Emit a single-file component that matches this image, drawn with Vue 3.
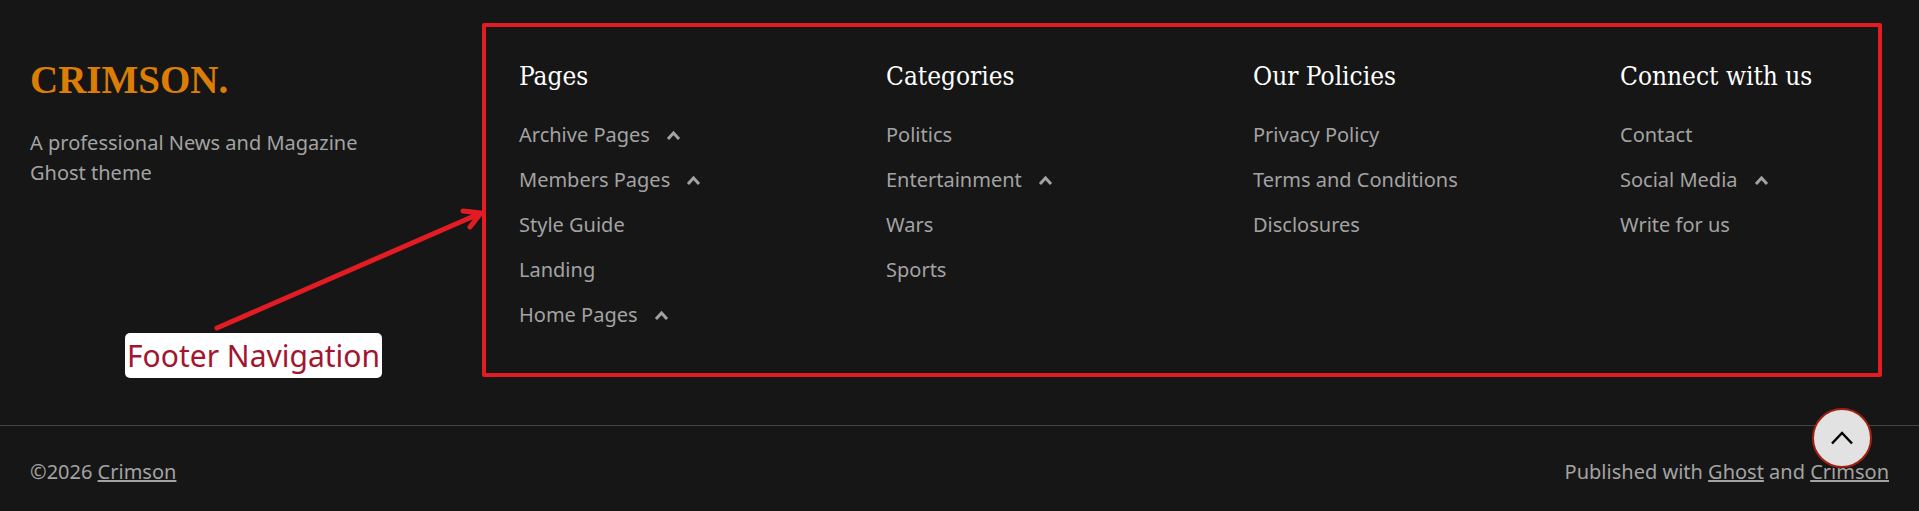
<template>
  <footer class="site-footer">
    <div class="footer-top">
      <div class="brand">
        <a class="logo">CRIMSON.</a>
        <p class="tagline">A professional News and Magazine Ghost theme</p>
      </div>
      <nav class="footer-nav">
        <div v-for="col in columns" :key="col.title" class="nav-col">
          <h4 class="nav-title">{{ col.title }}</h4>
          <ul class="nav-list">
            <li v-for="item in col.items" :key="item.label" class="nav-item">
              <span>{{ item.label }}</span>
              <svg v-if="item.sub" class="chevron" viewBox="0 0 15 11" width="15" height="11">
                <path d="M2 9 L7.5 3 L13 9" fill="none" stroke="currentColor" stroke-width="3" />
              </svg>
            </li>
          </ul>
        </div>
      </nav>
    </div>
    <div class="footer-bottom">
      <span>©2026 <a class="link">Crimson</a></span>
      <span>Published with <a class="link">Ghost</a> and <a class="link">Crimson</a></span>
    </div>

    <div class="note-box"></div>
    <svg class="note-arrow" viewBox="0 0 300 140" width="300" height="140">
      <path d="M17 128 L281 13 M263 11 L281 13 L270 27" fill="none" stroke="#e31b23" stroke-width="5" stroke-linecap="round" stroke-linejoin="round" />
    </svg>
    <div class="note-label">Footer Navigation</div>

    <button class="to-top">
      <svg viewBox="0 0 24 14" width="24" height="14">
        <path d="M2 12.5 L12 2 L22 12.5" fill="none" stroke="#000" stroke-width="2.5" />
      </svg>
    </button>
  </footer>
</template>

<script setup>
const columns = [
  {
    title: "Pages",
    items: [
      { label: "Archive Pages", sub: true },
      { label: "Members Pages", sub: true },
      { label: "Style Guide" },
      { label: "Landing" },
      { label: "Home Pages", sub: true },
    ],
  },
  {
    title: "Categories",
    items: [
      { label: "Politics" },
      { label: "Entertainment", sub: true },
      { label: "Wars" },
      { label: "Sports" },
    ],
  },
  {
    title: "Our Policies",
    items: [
      { label: "Privacy Policy" },
      { label: "Terms and Conditions" },
      { label: "Disclosures" },
    ],
  },
  {
    title: "Connect with us",
    items: [
      { label: "Contact" },
      { label: "Social Media", sub: true },
      { label: "Write for us" },
    ],
  },
];
</script>

<style>
html,
body {
  margin: 0;
  background: #161616;
  overflow: hidden;
}
</style>

<style scoped>
.site-footer {
  position: relative;
  height: 511px;
  background: #161616;
  color: #a3a3a3;
  font-family: "Noto Sans", sans-serif;
  font-size: 20px;
  line-height: 30px;
  overflow: hidden;
}

.footer-top {
  display: flex;
  height: 425px;
  padding: 58px 30px 0;
  box-sizing: border-box;
}

.brand {
  width: 489px;
  flex-shrink: 0;
}

.logo {
  display: block;
  height: 44px;
  color: #dc7d05;
  font-family: "Liberation Serif", serif;
  font-weight: 700;
  font-size: 39px;
  line-height: 44px;
}

.tagline {
  margin: 26px 0 0;
  width: 360px;
}

.footer-nav {
  display: grid;
  grid-template-columns: repeat(4, 367px);
}

.nav-title {
  margin: 0 0 26px;
  color: #fff;
  font-family: "DejaVu Serif Condensed", "DejaVu Serif", serif;
  font-weight: 400;
  font-size: 26px;
  line-height: 36px;
}

.nav-list {
  margin: 0;
  padding: 0;
  list-style: none;
  display: flex;
  flex-direction: column;
  gap: 15px;
}

.nav-item {
  display: flex;
  align-items: center;
  gap: 16px;
}

.chevron {
  color: #a3a3a3;
}

.footer-bottom {
  display: flex;
  justify-content: space-between;
  padding: 31px 30px 0;
  border-top: 1px solid #444;
}

.link {
  text-decoration: underline;
}

.note-box {
  position: absolute;
  left: 482px;
  top: 23px;
  width: 1400px;
  height: 354px;
  box-sizing: border-box;
  border: 4px solid #e31b23;
  border-radius: 2px;
}

.note-arrow {
  position: absolute;
  left: 200px;
  top: 200px;
}

.note-label {
  position: absolute;
  left: 125px;
  top: 333px;
  width: 257px;
  height: 45px;
  background: #fff;
  border-radius: 5px;
  color: #a3152f;
  font-size: 30px;
  line-height: 45px;
  text-align: center;
  white-space: nowrap;
}

.to-top {
  position: absolute;
  left: 1812px;
  top: 408px;
  width: 60px;
  height: 60px;
  padding: 0;
  display: flex;
  align-items: center;
  justify-content: center;
  background: #e2e2e2;
  border: 2px solid #a32010;
  border-radius: 50%;
}
</style>
